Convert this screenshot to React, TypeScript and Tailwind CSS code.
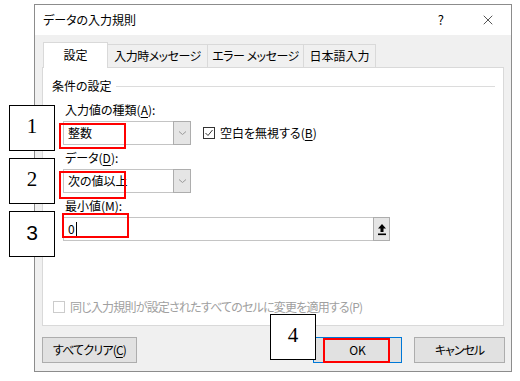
import { X } from 'lucide-react';

const font = { fontFamily: '"Noto Sans CJK JP", "Noto Sans", sans-serif' };

function U({ children }: { children: string }) {
  return <span className="underline underline-offset-2">{children}</span>;
}

function Combo({ value }: { value: string }) {
  return (
    <div className="flex w-[128px] h-[24px] border border-[#c4c4c4] bg-white">
      <div className="flex-1 flex items-center pl-[4px] text-[12px] text-black">{value}</div>
      <div className="w-[18px] flex items-center justify-center bg-[#e5e5e5] border-l border-[#adadad] -my-px -mr-px border-y border-r">
        <svg width="9" height="6" viewBox="0 0 9 6">
          <path d="M1 1.5 L4.5 4.5 L8 1.5" fill="none" stroke="#9a9a9a" strokeWidth="1" />
        </svg>
      </div>
    </div>
  );
}

function NumBox({ n, className, sans }: { n: string; className: string; sans?: boolean }) {
  return (
    <div
      className={`absolute w-[46px] h-[46px] border border-black bg-white flex items-center justify-center text-[21px] text-black pb-[3px] ${className}`}
      style={{ fontFamily: sans ? '"Liberation Sans", sans-serif' : '"Liberation Serif", serif' }}
    >
      {n}
    </div>
  );
}

export default function App() {
  return (
    <div className="relative w-[520px] h-[381px] bg-white overflow-hidden [font-feature-settings:'palt']" style={font}>
      <div className="ml-[34px] mt-[4px] w-[478px] h-[368px] border border-[#8c8c8c] flex flex-col bg-[#f0f0f0]">
        {/* title bar */}
        <div className="h-[30px] bg-white flex items-center pl-[8px] text-[12px] text-black">
          <span>データの入力規則</span>
          <span className="ml-auto mr-[36px] text-[13px]">?</span>
          <X size={16} strokeWidth={1} className="mr-[15px]" />
        </div>

        <div className="flex-1 flex flex-col px-[7px] pt-[7px]">
          {/* tabs */}
          <div className="flex items-end h-[25px] pl-px text-[12px] text-black whitespace-nowrap">
            <div className="relative z-10 w-[65px] h-[26px] -mb-px bg-white border-t border-x border-[#d9d9d9] flex items-center justify-center pb-[2px]">
              設定
            </div>
            <div className="w-[100px] h-[23px] border-t border-r border-[#d9d9d9] flex items-center justify-center tracking-[-0.5px]">
              入力時メッセージ
            </div>
            <div className="w-[96px] h-[23px] border-t border-r border-[#d9d9d9] flex items-center justify-center tracking-[-0.5px]">
              エラー メッセージ
            </div>
            <div className="w-[72px] h-[23px] border-t border-r border-[#d9d9d9] flex items-center justify-center">
              日本語入力
            </div>
          </div>

          {/* panel */}
          <div className="h-[259px] bg-white border border-[#d9d9d9] flex flex-col text-[12px] text-black">
            <div className="flex items-center mt-[10px] ml-[9px] mr-[8px] leading-[16px]">
              <span>条件の設定</span>
              <div className="flex-1 h-px bg-[#dcdcdc] ml-[4px]" />
            </div>

            <div className="flex flex-col pl-[20px]">
              <div className="mt-[8px] ml-[2px] leading-[16px]">
                入力値の種類(<U>A</U>):
              </div>
              <div className="mt-[3px] flex items-center">
                <Combo value="整数" />
                <div className="ml-[12px] flex items-center">
                  <div className="w-[12px] h-[12px] border border-[#333] flex items-center justify-center">
                    <svg width="10" height="10" viewBox="0 0 10 10">
                      <path d="M1.5 5 L4 7.5 L8.5 2" fill="none" stroke="#333" strokeWidth="1" />
                    </svg>
                  </div>
                  <span className="ml-[5px] leading-[16px]">
                    空白を無視する(<U>B</U>)
                  </span>
                </div>
              </div>

              <div className="mt-[5px] ml-[2px] leading-[16px]">
                データ(<U>D</U>):
              </div>
              <div className="mt-[3px]">
                <Combo value="次の値以上" />
              </div>

              <div className="mt-[5px] ml-[2px] leading-[16px]">
                最小値(<U>M</U>):
              </div>
              <div className="mt-[3px] flex w-[327px] h-[24px] border border-[#c4c4c4] bg-white">
                <div className="flex-1 flex items-center pl-[4px]">
                  <span>0</span>
                  <span className="w-px h-[14px] bg-black ml-[1px]" />
                </div>
                <div className="w-[17px] flex items-center justify-center bg-[#e5e5e5] border border-[#adadad] -my-px -mr-px">
                  <svg width="10" height="13" viewBox="0 0 10 13">
                    <path d="M5 1 L9 5.5 L6.5 5.5 L6.5 9 L3.5 9 L3.5 5.5 L1 5.5 Z" fill="#000" />
                    <rect x="1" y="10.5" width="8" height="1.6" fill="#000" />
                  </svg>
                </div>
              </div>
            </div>

            <div className="flex-1" />
            <div className="flex items-center ml-[10px] mb-[10px] text-[#a0a0a0] leading-[16px]">
              <div className="w-[12px] h-[12px] border border-[#cccccc]" />
              <span className="ml-[5px] tracking-[-0.8px]">同じ入力規則が設定されたすべてのセルに変更を適用する(P)</span>
            </div>
          </div>

          {/* buttons */}
          <div className="flex mt-[11px] text-[12px] text-black">
            <button className="w-[95px] h-[26px] bg-[#e1e1e1] border border-[#adadad] flex items-center justify-center tracking-[-0.8px]">
              すべてクリア(<U>C</U>)
            </button>
            <div className="flex-1" />
            <button className="w-[89px] h-[26px] bg-[#e1e1e1] border border-[#0078d7] flex items-center justify-center">
              OK
            </button>
            <button className="ml-[12px] -mr-px w-[91px] h-[26px] bg-[#e1e1e1] border border-[#adadad] flex items-center justify-center tracking-[-1px]">
              キャンセル
            </button>
          </div>
        </div>
      </div>

      {/* red highlight marks */}
      <div className="absolute left-[59px] top-[123px] w-[67px] h-[26px] border-2 border-[#ff0000]" />
      <div className="absolute left-[59px] top-[171px] w-[67px] h-[28px] border-2 border-[#ff0000]" />
      <div className="absolute left-[62px] top-[213px] w-[67px] h-[25px] border-2 border-[#ff0000]" />
      <div className="absolute left-[323px] top-[338px] w-[67px] h-[25px] border-2 border-[#ff0000]" />

      {/* numbered callouts */}
      <NumBox n="1" className="left-[9px] top-[105px]" />
      <NumBox n="2" className="left-[9px] top-[158px]" />
      <NumBox n="3" className="left-[9px] top-[211px]" sans />
      <NumBox n="4" className="left-[270px] top-[314px]" />
    </div>
  );
}
